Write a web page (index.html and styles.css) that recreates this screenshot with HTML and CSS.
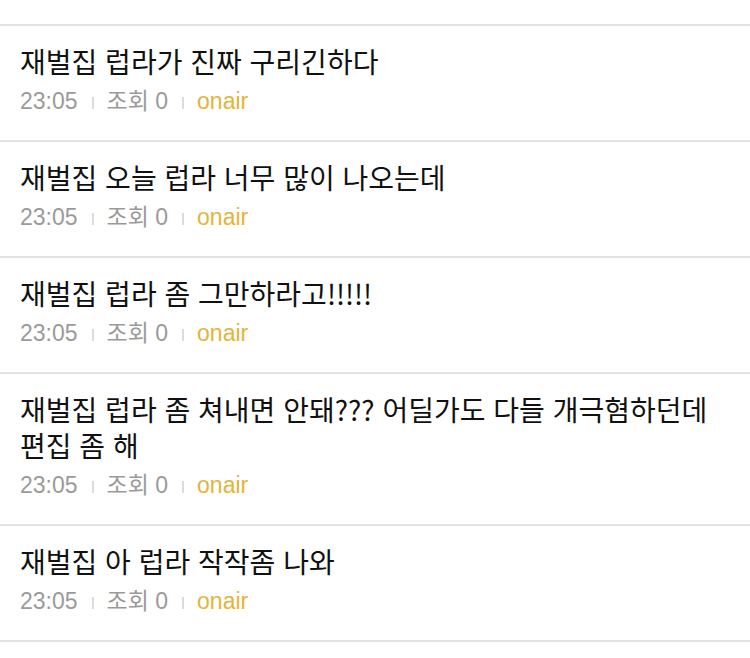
FILE: index.html
```html
<!DOCTYPE html>
<html lang="ko">
<head>
<meta charset="utf-8">
<link rel="stylesheet" href="styles.css">
</head>
<body>
<div class="top"></div>
<ul class="list">
  <li class="item">
    <div class="title">재벌집 럽라가 진짜 구리긴하다</div>
    <div class="meta"><span>23:05</span><span class="sep"></span><span>조회 0</span><span class="sep"></span><span class="nick">onair</span></div>
  </li>
  <li class="item">
    <div class="title">재벌집 오늘 럽라 너무 많이 나오는데</div>
    <div class="meta"><span>23:05</span><span class="sep"></span><span>조회 0</span><span class="sep"></span><span class="nick">onair</span></div>
  </li>
  <li class="item">
    <div class="title">재벌집 럽라 좀 그만하라고!!!!!</div>
    <div class="meta"><span>23:05</span><span class="sep"></span><span>조회 0</span><span class="sep"></span><span class="nick">onair</span></div>
  </li>
  <li class="item">
    <div class="title">재벌집 럽라 좀 쳐내면 안돼??? 어딜가도 다들 개극혐하던데 편집 좀 해</div>
    <div class="meta"><span>23:05</span><span class="sep"></span><span>조회 0</span><span class="sep"></span><span class="nick">onair</span></div>
  </li>
  <li class="item">
    <div class="title">재벌집 아 럽라 작작좀 나와</div>
    <div class="meta"><span>23:05</span><span class="sep"></span><span>조회 0</span><span class="sep"></span><span class="nick">onair</span></div>
  </li>
</ul>
</body>
</html>
```
FILE: styles.css
```css
html, body {
  margin: 0;
  padding: 0;
  background: #fff;
}
body {
  font-family: "Noto Sans CJK KR", "Noto Sans", sans-serif;
  width: 750px;
  height: 658px;
  overflow: hidden;
}
.top {
  height: 24px;
  border-bottom: 2px solid #e2e2e2;
}
.list {
  list-style: none;
  margin: 0;
  padding: 0;
}
.item {
  padding: 17px 20px 26px;
  border-bottom: 2px solid #e2e2e2;
}
.title {
  font-size: 28px;
  line-height: 36px;
  color: #111;
}
.meta {
  margin-top: 9px;
  display: flex;
  align-items: center;
  font-family: "Liberation Sans", "Noto Sans CJK KR", sans-serif;
  font-size: 23px;
  line-height: 26px;
  color: #9a9a9a;
}
.sep {
  width: 2px;
  height: 12px;
  background: #dcdcdc;
  margin: 3px 13px 0 14px;
}
.nick {
  color: #e2b53c;
}
```
